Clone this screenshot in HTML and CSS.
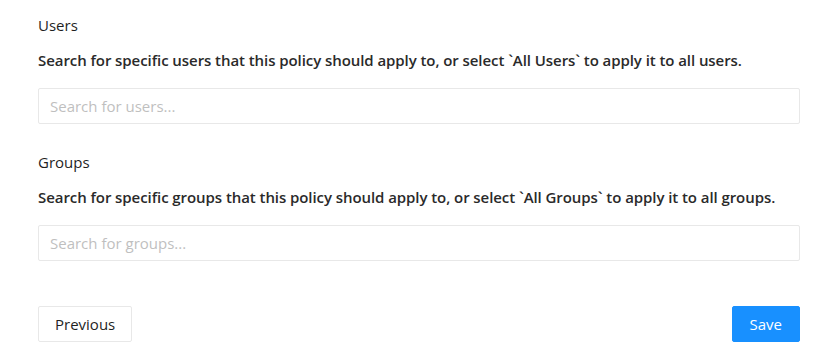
FILE: index.html
```html
<!DOCTYPE html>
<html>
<head>
<meta charset="utf-8">
<link rel="stylesheet" href="styles.css">
</head>
<body>
<div class="page">
  <section class="field">
    <div class="label">Users</div>
    <div class="desc">Search for specific users that this policy should apply to, or select `All Users` to apply it to all users.</div>
    <input class="search" type="text" placeholder="Search for users...">
  </section>
  <section class="field">
    <div class="label">Groups</div>
    <div class="desc">Search for specific groups that this policy should apply to, or select `All Groups` to apply it to all groups.</div>
    <input class="search" type="text" placeholder="Search for groups...">
  </section>
  <div class="actions">
    <button class="btn">Previous</button>
    <button class="btn primary">Save</button>
  </div>
</div>
</body>
</html>
```
FILE: styles.css
```css
html, body {
  margin: 0;
  padding: 0;
  background: #fff;
}
body {
  font-family: "Open Sans", "Noto Sans", sans-serif;
  font-size: 15px;
  color: #262626;
}
.page {
  padding: 14px 38px 0 38px;
  display: flex;
  flex-direction: column;
}
.field {
  display: flex;
  flex-direction: column;
  margin-bottom: 27px;
}
.label {
  line-height: 22px;
  margin-bottom: 13px;
  color: #1f1f1f;
}
.desc {
  line-height: 22px;
  font-weight: 600;
  letter-spacing: -0.07px;
  margin-bottom: 17px;
  color: #2a2a2a;
}
.search {
  box-sizing: border-box;
  height: 36px;
  border: 1px solid #e8e8e8;
  border-radius: 2px;
  padding: 0 11px;
  font-family: inherit;
  font-size: 15px;
  outline: none;
}
.search::placeholder {
  color: #bfbfbf;
}
.actions {
  display: flex;
  justify-content: space-between;
  margin-top: 18px;
}
.btn {
  box-sizing: border-box;
  height: 36px;
  padding: 0 16px;
  font-family: inherit;
  font-size: 15px;
  border: 1px solid #e8e8e8;
  border-radius: 2px;
  background: #fff;
  color: #1f1f1f;
}
.btn.primary {
  padding: 0 17px;
  background: #1890ff;
  border-color: #1890ff;
  color: #fff;
}
```
